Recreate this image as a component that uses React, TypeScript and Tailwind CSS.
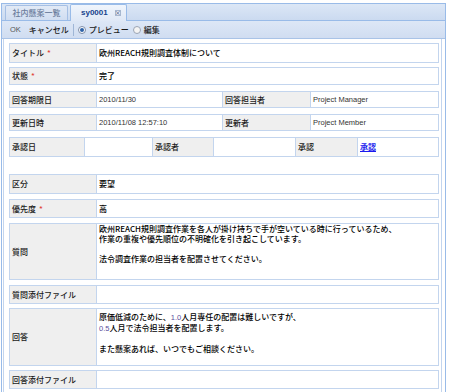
import React from "react";

const Req = () => <span className="ml-[3px] text-[#e0443a] text-[8px] leading-none">*</span>;

function Label({ children, w }: { children: React.ReactNode; w: string }) {
  return (
    <div className={`${w} shrink-0 bg-[#efefef] flex items-center pl-[2px] text-[#1a1a1a]`}>{children}</div>
  );
}

export default function App() {
  const jp = "font-['Noto_Sans_CJK_JP','Noto_Sans_CJK_SC',sans-serif]";
  const lat = "font-['Liberation_Sans',Arial,sans-serif]";
  const row = "flex w-[430px] border border-[#c3d5ee] bg-white";
  const cell = "border-l border-[#c3d5ee] flex items-center pl-[2px]";
  return (
    <div className={`w-[450px] h-[392px] bg-white overflow-hidden pt-[3px] pl-[1px] ${jp} font-medium text-[8px] text-black`}>
      <div className="w-[445px] h-[389px] border-x border-t border-[#99bbe8] flex flex-col">
        {/* tab strip */}
        <div className="h-[17px] shrink-0 border-b border-[#99bbe8] bg-gradient-to-b from-[#dce7f6] to-[#cbdaf0] flex items-end pl-[3px] gap-[2px]">
          <div className="h-[15px] w-[63px] border border-b-0 border-[#a5bfe4] rounded-t-[2px] bg-gradient-to-b from-[#e2eaf6] to-[#d0ddf1] text-[#6a7c9c] flex items-center justify-center">
            社内懸案一覧
          </div>
          <div className="h-[17px] w-[57px] border border-b-0 border-[#99bbe8] rounded-t-[2px] bg-gradient-to-b from-[#f0f5fc] to-[#dfe8f6] flex items-center relative top-[1px]">
            <span className={`${lat} font-bold text-[8px] text-[#15428b] ml-[10px]`}>sy0001</span>
            <span className="ml-[7px] w-[6px] h-[6px] border border-[#a8b8d0] bg-[#e8eef8] flex items-center justify-center text-[6px] leading-none text-[#5a6a88]">×</span>
          </div>
        </div>
        {/* toolbar */}
        <div className="h-[18px] shrink-0 border-b border-[#a9c3e7] bg-gradient-to-b from-[#dde7f6] to-[#d0ddf1] flex items-center pl-[8px] text-[#1a1a1a]">
          <span className={`${lat} text-[7.5px] text-[#555]`}>OK</span>
          <span className="ml-[8px]">キャンセル</span>
          <span className="ml-[4px] w-px h-[12px] bg-[#9fb6d6]" />
          <span className="ml-[4px] w-[8px] h-[8px] rounded-full border border-[#7f8ea8] bg-white flex items-center justify-center">
            <span className="w-[4px] h-[4px] rounded-full bg-[#2e62a8]" />
          </span>
          <span className="ml-[3px]">プレビュー</span>
          <span className="ml-[4px] w-[8px] h-[8px] rounded-full border border-[#9aa4b4] bg-[#f4f4f4]" />
          <span className="ml-[3px]">編集</span>
        </div>
        {/* body */}
        <div className="flex-1 bg-white">
          <div className="ml-[1px] mr-[3px] h-full border-x border-[#c3d5ee] pl-[5px] pt-[4px]">
            <div className={`${row} h-[20px]`}>
              <Label w="w-[86px]">タイトル<Req /></Label>
              <div className={`${cell} flex-1`}>欧州REACH規則調査体制について</div>
            </div>
            <div className={`${row} h-[18px] mt-[4px]`}>
              <Label w="w-[86px]">状態<Req /></Label>
              <div className={`${cell} flex-1`}>完了</div>
            </div>
            <div className={`${row} h-[17px] mt-[6px]`}>
              <Label w="w-[86px]">回答期限日</Label>
              <div className={`${cell} w-[126px] ${lat} font-normal text-[7.5px] text-[#333]`}>2010/11/30</div>
              <div className="border-l border-[#c3d5ee] w-[88px] bg-[#efefef] flex items-center pl-[2px] text-[#1a1a1a]">回答担当者</div>
              <div className={`${cell} flex-1 ${lat} font-normal text-[7.5px] text-[#333]`}>Project Manager</div>
            </div>
            <div className={`${row} h-[17px] mt-[6px]`}>
              <Label w="w-[86px]">更新日時</Label>
              <div className={`${cell} w-[126px] ${lat} font-normal text-[7.5px] text-[#333]`}>2010/11/08 12:57:10</div>
              <div className="border-l border-[#c3d5ee] w-[88px] bg-[#efefef] flex items-center pl-[2px] text-[#1a1a1a]">更新者</div>
              <div className={`${cell} flex-1 ${lat} font-normal text-[7.5px] text-[#333]`}>Project Member</div>
            </div>
            <div className={`${row} h-[20px] mt-[6px]`}>
              <Label w="w-[74px]">承認日</Label>
              <div className={`${cell} w-[68px]`} />
              <div className="border-l border-[#c3d5ee] w-[61px] bg-[#efefef] flex items-center pl-[2px] text-[#1a1a1a]">承認者</div>
              <div className={`${cell} w-[82px]`} />
              <div className="border-l border-[#c3d5ee] w-[62px] bg-[#efefef] flex items-center pl-[2px] text-[#1a1a1a]">承認</div>
              <div className={`${cell} flex-1`}>
                <span className="text-[#1a1aee] underline font-bold">承認</span>
              </div>
            </div>
            <div className={`${row} h-[20px] mt-[17px]`}>
              <Label w="w-[86px]">区分</Label>
              <div className={`${cell} flex-1`}>要望</div>
            </div>
            <div className={`${row} h-[19px] mt-[5px]`}>
              <Label w="w-[86px]">優先度<Req /></Label>
              <div className={`${cell} flex-1`}>高</div>
            </div>
            <div className={`${row} h-[57px] mt-[5px]`}>
              <Label w="w-[86px]">質問</Label>
              <div className="border-l border-[#c3d5ee] flex-1 pl-[2px] pt-[0px] leading-[10px]">
                <div>欧州REACH規則調査作業を各人が掛け持ちで手が空いている時に行っているため、</div>
                <div>作業の重複や優先順位の不明確化を引き起こしています。</div>
                <div className="h-[10px]" />
                <div>法令調査作業の担当者を配置させてください。</div>
              </div>
            </div>
            <div className={`${row} h-[19px] mt-[5px]`}>
              <Label w="w-[86px]">質問添付ファイル</Label>
              <div className={`${cell} flex-1`} />
            </div>
            <div className={`${row} h-[58px] mt-[4px]`}>
              <Label w="w-[86px]">回答</Label>
              <div className="border-l border-[#c3d5ee] flex-1 pl-[2px] pt-[3px] leading-[10px]">
                <div>
                  原価低減のために、<span className={`${lat} font-normal text-[7.5px] text-[#5a4f9c]`}>1.0</span>人月専任の配置は難しいですが、
                </div>
                <div>
                  <span className={`${lat} font-normal text-[7.5px] text-[#5a4f9c]`}>0.5</span>人月で法令担当者を配置します。
                </div>
                <div className="h-[10px]" />
                <div>また懸案あれば、いつでもご相談ください。</div>
              </div>
            </div>
            <div className={`${row} h-[19px] mt-[4px]`}>
              <Label w="w-[86px]">回答添付ファイル</Label>
              <div className={`${cell} flex-1`} />
            </div>
          </div>
        </div>
      </div>
    </div>
  );
}
